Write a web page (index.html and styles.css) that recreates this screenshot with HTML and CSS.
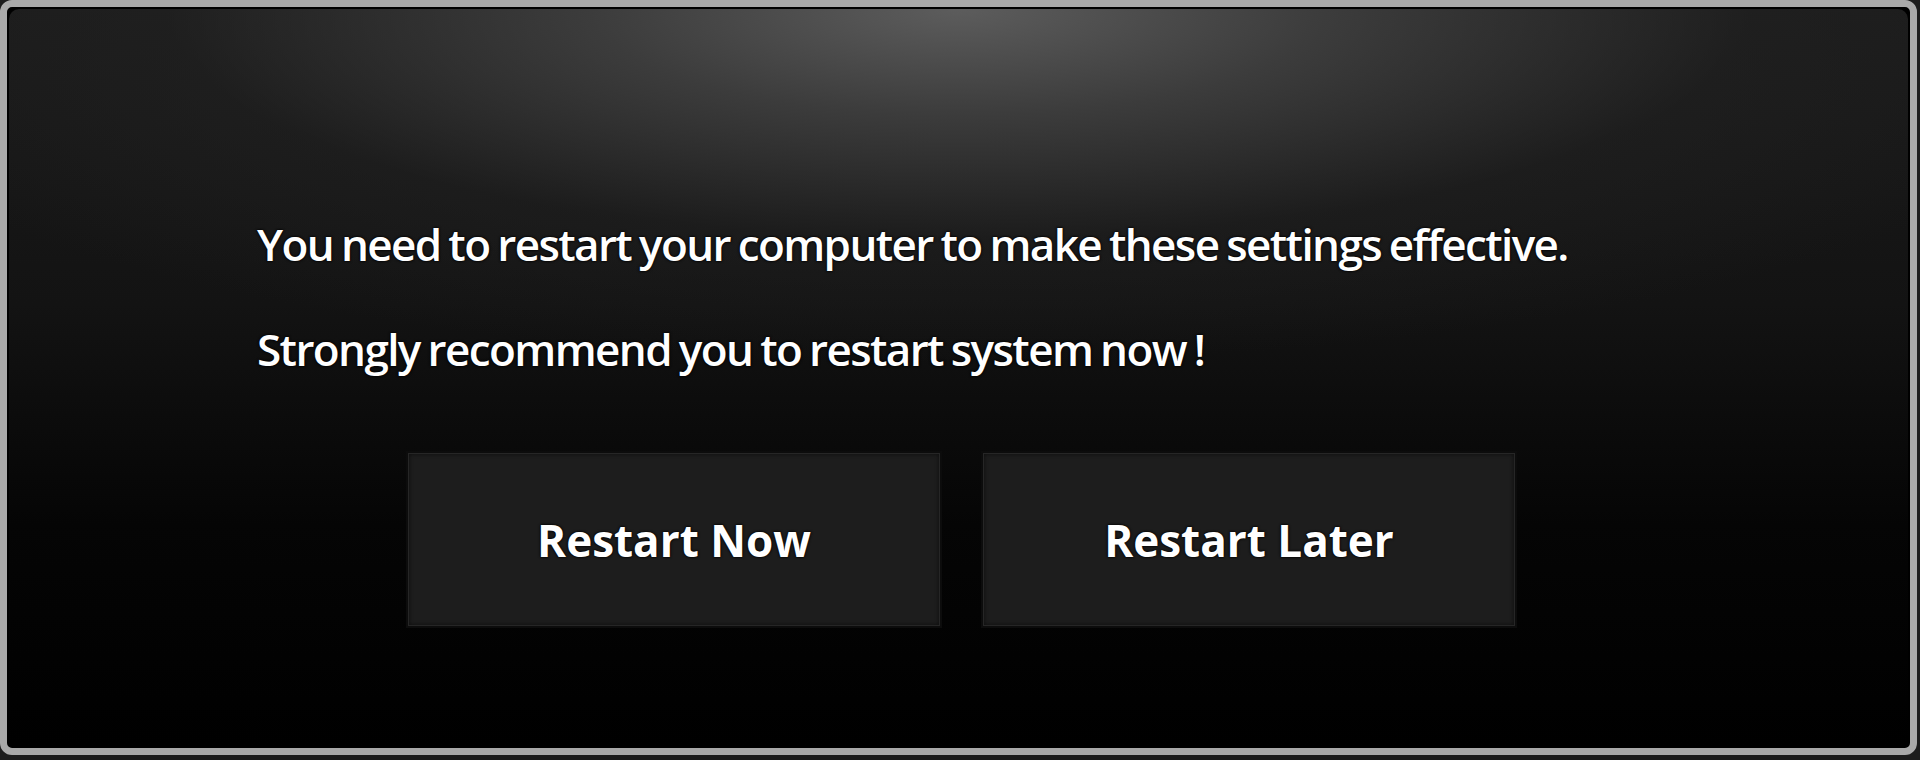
FILE: index.html
```html
<!DOCTYPE html>
<html lang="en">
<head>
<meta charset="utf-8">
<title>Restart</title>
<link rel="stylesheet" href="styles.css">
</head>
<body>
<div class="window">
  <div class="panel">
    <div class="message">
      <p class="line">You need to restart your computer to make these settings effective.</p>
      <p class="line">Strongly recommend you to restart system now !</p>
    </div>
    <div class="actions">
      <button class="btn">Restart Now</button>
      <button class="btn">Restart Later</button>
    </div>
  </div>
</div>
</body>
</html>
```
FILE: styles.css
```css
html, body {
  margin: 0;
  padding: 0;
  background: #1c1c1c;
  width: 1920px;
  height: 760px;
  overflow: hidden;
}
.window {
  box-sizing: border-box;
  width: 1917px;
  height: 755px;
  border: 7px solid #a9a9a9;
  border-radius: 12px;
  background: #000;
  padding: 2px;
}
.panel {
  box-sizing: border-box;
  height: 100%;
  border-radius: 10px;
  background:
    radial-gradient(ellipse 64% 48% at 50% 0%, rgba(96,96,96,0.95) 0%, rgba(66,66,66,0.85) 30%, rgba(36,36,36,0.45) 65%, rgba(0,0,0,0) 100%),
    linear-gradient(to bottom, #1b1b1b 0%, #131313 40%, #050505 70%, #000 100%);
  display: flex;
  flex-direction: column;
  padding: 205px 0 0 248px;
  font-family: "Open Sans", "Liberation Sans", sans-serif;
  color: #fff;
}
.message {
  display: flex;
  flex-direction: column;
  gap: 45px;
}
.line {
  margin: 0;
  font-size: 44px;
  line-height: 60px;
  letter-spacing: -1.6px;
  word-spacing: -2px;
  font-weight: 600;
  text-shadow: 0 0 2px #000, 0 0 3px #000;
}
.actions {
  display: flex;
  gap: 43px;
  margin-top: 74px;
  margin-left: 151px;
}
.btn {
  width: 532px;
  height: 173px;
  background: #1d1d1d;
  border: 1px solid #262626;
  box-shadow: 0 0 0 2px #0c0c0c, inset 0 0 4px rgba(0,0,0,0.6);
  color: #fff;
  font-family: "Open Sans", "Liberation Sans", sans-serif;
  font-weight: 700;
  font-size: 44px;
  letter-spacing: 0;
  padding: 0;
  text-shadow: 0 0 2px #000, 0 0 3px #000;
}
```
